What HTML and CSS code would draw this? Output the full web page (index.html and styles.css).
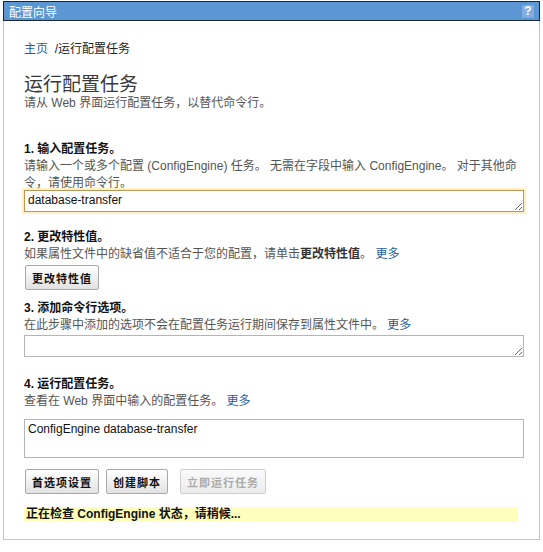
FILE: index.html
```html
<!DOCTYPE html>
<html lang="zh-CN">
<head>
    <meta charset="UTF-8">
    <meta name="viewport" content="width=device-width, initial-scale=1.0">
    <title>配置向导</title>
    <link rel="stylesheet" href="styles.css">
</head>
<body>
    <div class="wizard">
        <div class="titlebar">
            <span class="title">配置向导</span>
            <span class="help">?</span>
        </div>
        <div class="panel">
            <div class="crumbs"><a href="#">主页</a> &nbsp;/运行配置任务</div>
            <h1>运行配置任务</h1>
            <p class="intro">请从 Web 界面运行配置任务，以替代命令行。</p>

            <div class="step step1">
                <h2>1. 输入配置任务。</h2>
                <p class="desc">请输入一个或多个配置 (ConfigEngine) 任务。 无需在字段中输入 ConfigEngine。 对于其他命令，请使用命令行。</p>
                <textarea class="field focused">database-transfer</textarea>
            </div>

            <div class="step step2">
                <h2>2. 更改特性值。</h2>
                <p class="desc">如果属性文件中的缺省值不适合于您的配置，请单击<b>更改特性值</b>。 <a href="#">更多</a></p>
                <button class="button">更改特性值</button>
            </div>

            <div class="step step3">
                <h2>3. 添加命令行选项。</h2>
                <p class="desc">在此步骤中添加的选项不会在配置任务运行期间保存到属性文件中。 <a href="#">更多</a></p>
                <textarea class="field"></textarea>
            </div>

            <div class="step step4">
                <h2>4. 运行配置任务。</h2>
                <p class="desc">查看在 Web 界面中输入的配置任务。 <a href="#">更多</a></p>
                <textarea class="field tall" readonly>ConfigEngine database-transfer</textarea>
            </div>

            <div class="actions">
                <button class="button">首选项设置</button>
                <button class="button">创建脚本</button>
                <button class="button" disabled>立即运行任务</button>
            </div>

            <div class="status">正在检查 ConfigEngine 状态，请稍候...</div>
        </div>
    </div>
</body>
</html>
```

FILE: styles.css
```css
body {
    margin: 0;
    background-color: #fff;
    font-family: "Liberation Sans", "Noto Sans CJK SC", sans-serif;
    font-size: 12px;
    color: #333;
}
a {
    color: #1f5e9e;
    text-decoration: none;
}
.wizard {
    margin: 1px 3px 0 3px;
    width: 537px;
}
.titlebar {
    display: flex;
    align-items: center;
    justify-content: space-between;
    height: 18px;
    padding: 0 5px 0 5px;
    background-color: #5b97d3;
    border: 1px solid #1c2736;
}
.title {
    color: #fff;
    font-size: 12px;
}
.help {
    width: 12px;
    height: 13px;
    line-height: 13px;
    text-align: center;
    background-color: #82ade0;
    color: #fff;
    font-weight: bold;
    font-size: 12px;
}
.panel {
    border: 1px solid #c4c4c4;
    border-top: none;
    padding: 20px 16px 17px 20px;
}
.crumbs {
    line-height: 17px;
    color: #222;
}
h1 {
    margin: 16px 0 0 0;
    font-size: 19px;
    font-weight: normal;
    line-height: 21px;
    color: #3a3a3a;
}
.intro {
    margin: 0;
    line-height: 17px;
    color: #555;
}
h2 {
    margin: 0;
    font-size: 12px;
    font-weight: bold;
    line-height: 17px;
    color: #111;
}
.desc {
    margin: 0;
    line-height: 17px;
    color: #555;
}
.desc b {
    color: #333;
}
.step1 {
    margin-top: 29px;
}
.step2 {
    margin-top: 17px;
}
.step3 {
    margin-top: 10px;
}
.step4 {
    margin-top: 19px;
}
.field {
    display: block;
    box-sizing: border-box;
    width: 500px;
    height: 22px;
    margin: 0;
    padding: 2px 3px;
    border: 1px solid #b5b5b5;
    font-family: "Liberation Sans", sans-serif;
    font-size: 12px;
    color: #111;
    resize: vertical;
}
.step1 .field {
    margin-top: -2px;
}
.step3 .field {
    margin-top: 1px;
}
.focused {
    border-color: #b9975a;
    box-shadow: 0 0 1px 2px #fdf0c4;
    outline: none;
}
.tall {
    height: 39px;
    margin-top: 9px;
    resize: none;
}
.button {
    height: 25px;
    margin: 2px 0 0 1px;
    padding: 0 6px;
    font-family: "Liberation Sans", "Noto Sans CJK SC", sans-serif;
    font-size: 11px;
    font-weight: bold;
    letter-spacing: 1px;
    color: #111;
    background: linear-gradient(#ffffff, #e2e2e2);
    border: 1px solid #a9a9a9;
    border-radius: 2px;
}
.button:disabled {
    color: #aaa;
    border-color: #cfcfcf;
    background: linear-gradient(#fafafa, #ececec);
}
.actions {
    display: flex;
    gap: 7px;
    margin-top: 11px;
}
.actions .button {
    margin: 0;
}
.actions .button:first-child {
    margin-left: 1px;
}
.actions .button:disabled {
    margin-left: 5px;
}
.status {
    width: 490px;
    margin-top: 13px;
    padding: 0 2px;
    line-height: 15px;
    background-color: #ffffbd;
    font-weight: bold;
    color: #111;
}
```
